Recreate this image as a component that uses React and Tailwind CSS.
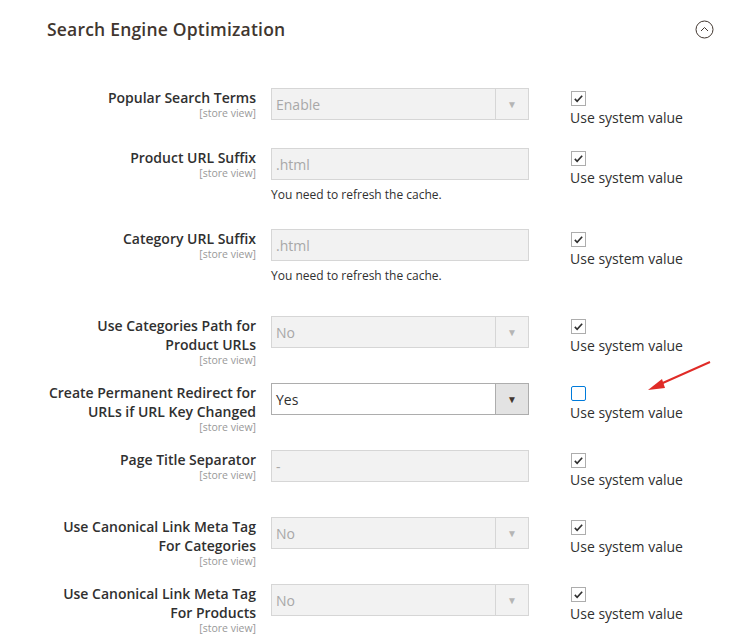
import React from "react";

const rows = [
  { label: ["Popular Search Terms"], type: "select", value: "Enable", h: "h-[60px]" },
  { label: ["Product URL Suffix"], type: "text", value: ".html", note: true, h: "h-[81px]" },
  { label: ["Category URL Suffix"], type: "text", value: ".html", note: true, h: "h-[87px]" },
  { label: ["Use Categories Path for", "Product URLs"], type: "select", value: "No", h: "h-[67px]" },
  { label: ["Create Permanent Redirect for", "URLs if URL Key Changed"], type: "select", value: "Yes", active: true, h: "h-[67px]" },
  { label: ["Page Title Separator"], type: "text", value: "-", h: "h-[67px]" },
  { label: ["Use Canonical Link Meta Tag", "For Categories"], type: "select", value: "No", h: "h-[67px]" },
  { label: ["Use Canonical Link Meta Tag", "For Products"], type: "select", value: "No", h: "h-[58px]" },
];

const Row = ({ r }) => (
  <div className={`flex ${r.h}`}>
    <div className="w-[256px] text-right">
      {r.label.map((l) => (
        <div key={l} className="text-[14px] leading-[19px] font-semibold text-[#303030]">{l}</div>
      ))}
      <div className="text-[10.5px] leading-[13px] text-[#999]">[store view]</div>
    </div>
    <div className="ml-[15px] w-[258px]">
      <div
        className={`h-[32px] flex items-center border ${
          r.active ? "bg-white border-[#adadad]" : "bg-[#f2f2f2] border-[#d6d6d6]"
        }`}
      >
        <span className={`flex-1 pl-[4px] text-[14px] ${r.active ? "text-[#303030]" : "text-[#a8a8a8]"}`}>{r.value}</span>
        {r.type === "select" && (
          <span
            className={`w-[33px] h-full flex items-center justify-center border-l text-[10px] ${
              r.active ? "bg-[#e3e3e3] border-[#adadad] text-[#41362f]" : "border-[#d6d6d6] text-[#b5b5b5]"
            }`}
          >
            ▼
          </span>
        )}
      </div>
      {r.note && <div className="text-[12px] text-[#303030] mt-[6px]">You need to refresh the cache.</div>}
    </div>
    <div className="ml-[42px] pt-[3px]">
      <div
        className={`w-[15px] h-[15px] border bg-white flex items-center justify-center ${
          r.active ? "border-[#007bdb] rounded-[2px]" : "border-[#adadad]"
        }`}
      >
        {!r.active && (
          <svg width="11" height="11" viewBox="0 0 12 12">
            <path d="M2 6.5l2.5 2.5L10 3" fill="none" stroke="#303030" strokeWidth="1.8" />
          </svg>
        )}
      </div>
      <div className="text-[14px] text-[#303030] mt-[1px] -ml-[1px]">Use system value</div>
    </div>
  </div>
);

export default function App() {
  return (
    <div className="relative w-[742px] h-[642px] bg-white overflow-hidden" style={{ fontFamily: '"Open Sans", sans-serif' }}>
      <div className="flex items-center justify-between pl-[47px] pr-[28px] pt-[16px]">
        <h2 className="text-[17.5px] font-semibold text-[#41362f] tracking-[0.2px]">Search Engine Optimization</h2>
        <svg width="19" height="19" viewBox="0 0 19 19">
          <circle cx="9.5" cy="9.5" r="8.5" fill="none" stroke="#41362f" strokeWidth="1" />
          <path d="M6 11l3.5-3.5L13 11" fill="none" stroke="#41362f" strokeWidth="1" />
        </svg>
      </div>
      <div className="mt-[46px]">
        {rows.map((r, i) => (
          <Row key={i} r={r} />
        ))}
      </div>
      <svg className="absolute left-[640px] top-[358px]" width="76" height="38" viewBox="0 0 76 38">
        <line x1="70" y1="4" x2="16" y2="28" stroke="#e02b27" strokeWidth="2" />
        <path d="M8 32l14-11 3 9z" fill="#e02b27" />
      </svg>
    </div>
  );
}
